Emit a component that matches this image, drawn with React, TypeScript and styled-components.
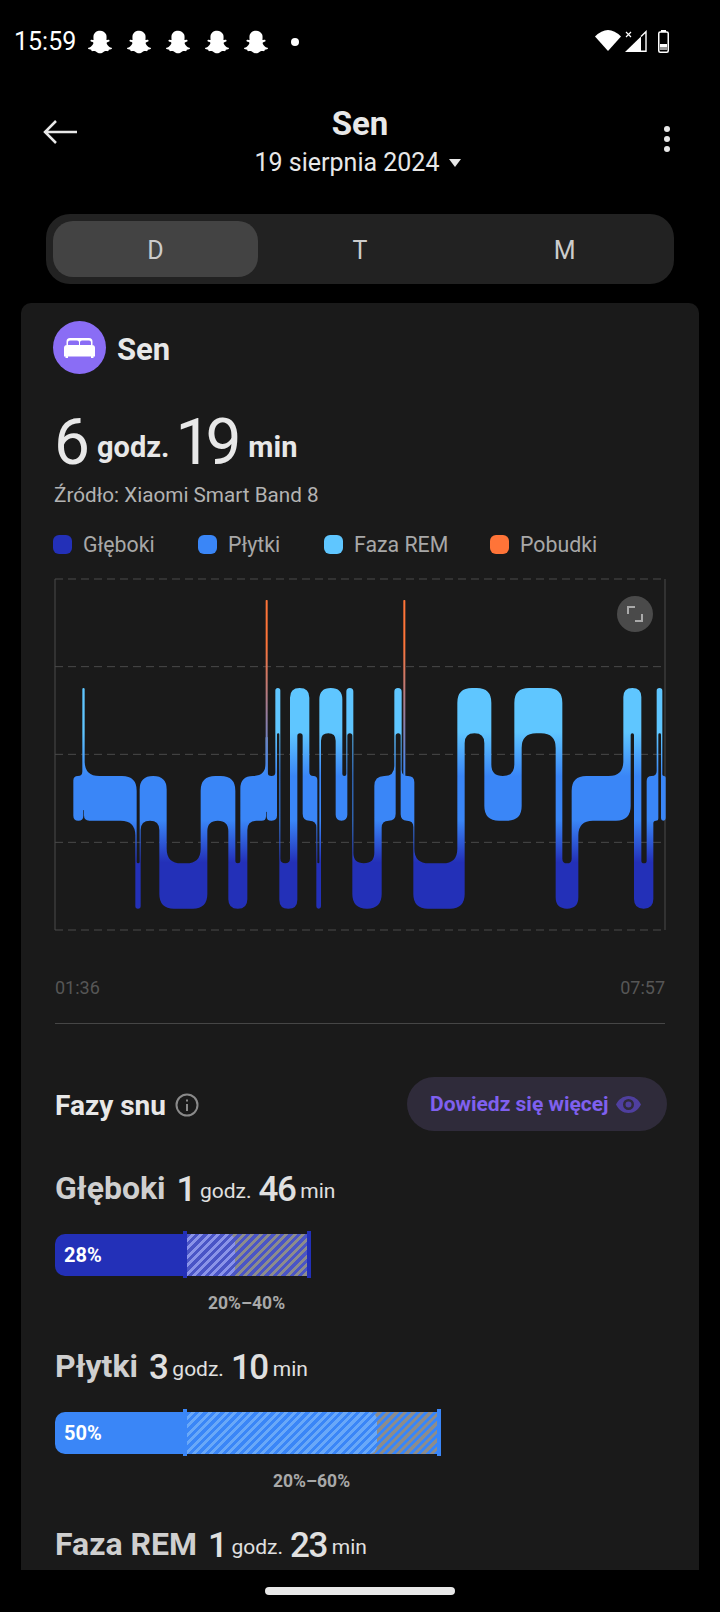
import styled, { createGlobalStyle } from "styled-components";
import { FaSnapchatGhost } from "react-icons/fa";

const GlobalStyle = createGlobalStyle`
    html, body {
        margin: 0;
        padding: 0;
        background: #000;
    }
    * {
        box-sizing: border-box;
    }
`;

const Page = styled.div`
    width: 720px;
    height: 1612px;
    background: #000;
    display: flex;
    flex-direction: column;
    overflow: hidden;
    font-family: Roboto, "Liberation Sans", sans-serif;
    color: #e8e8e8;
`;

const StatusBar = styled.div`
    height: 84px;
    flex: none;
    display: flex;
    align-items: center;
    padding: 0 51px 0 14px;
`;

const Clock = styled.span`
    font-size: 25px;
    line-height: 30px;
    color: #fff;
    margin-right: 12px;
`;

const Ghosts = styled.div`
    display: flex;
    gap: 15px;
    color: #fff;
`;

const StatusDot = styled.span`
    width: 8px;
    height: 8px;
    border-radius: 50%;
    background: #fff;
    margin-left: 23px;
`;

const StatusIcons = styled.div`
    margin-left: auto;
    height: 24px;
    display: flex;
    align-items: flex-start;
    gap: 4px;
`;

const Header = styled.header`
    flex: none;
    height: 130px;
    display: grid;
    grid-template-columns: 1fr auto 1fr;
    padding: 0 50px;
`;

const BackIcon = styled.svg`
    display: block;
    margin: 36px 0 0 -7px;
`;

const TitleBlock = styled.div`
    display: flex;
    flex-direction: column;
    align-items: center;
    padding-top: 20px;
`;

const Title = styled.h1`
    margin: 0;
    font-size: 33px;
    line-height: 40px;
    font-weight: 700;
`;

const DateRow = styled.div`
    display: flex;
    align-items: center;
    gap: 10px;
    font-size: 25px;
    line-height: 38px;
    margin-right: 4px;
`;

const Caret = styled.span`
    width: 0;
    height: 0;
    border-left: 6px solid transparent;
    border-right: 6px solid transparent;
    border-top: 8px solid #e8e8e8;
`;

const MoreDots = styled.div`
    justify-self: end;
    display: flex;
    flex-direction: column;
    gap: 4px;
    padding-top: 42px;
    span {
        width: 6px;
        height: 6px;
        border-radius: 50%;
        background: #e8e8e8;
    }
`;

const Tabs = styled.div`
    flex: none;
    margin: 0 46px;
    height: 70px;
    padding: 7px;
    border-radius: 24px;
    background: #222;
    display: grid;
    grid-template-columns: repeat(3, 1fr);
`;

const Tab = styled.div<{ $active?: boolean }>`
    display: flex;
    align-items: center;
    justify-content: center;
    padding-top: 3px;
    border-radius: 20px;
    font-size: 25px;
    color: #ccc;
    background: ${(p) => (p.$active ? "#434343" : "transparent")};
`;

const Card = styled.section`
    flex: 1;
    min-height: 0;
    margin: 19px 21px 0;
    padding: 18px 32px 0;
    border-radius: 10px 10px 0 0;
    background: #1a1a1a;
    overflow: hidden;
`;

const CardHead = styled.div`
    display: flex;
    align-items: center;
    gap: 11px;
`;

const BedCircle = styled.div`
    width: 53px;
    height: 53px;
    border-radius: 50%;
    background: #8a6df5;
    display: flex;
    align-items: center;
    justify-content: center;
`;

const CardTitle = styled.h2`
    margin: 4px 0 0;
    font-size: 31px;
    line-height: 40px;
    font-weight: 700;
`;

const Total = styled.div`
    display: flex;
    align-items: baseline;
    margin: 29px 0 0 1px;
    height: 78px;
    line-height: 80px;
`;

const TotalNum = styled.span`
    font-size: 64px;
    font-weight: 400;
    letter-spacing: -6px;
    margin-right: 13px;
`;

const TotalUnit = styled.span`
    font-size: 29px;
    font-weight: 700;
    margin-right: 6px;
    transform: translateY(-7px);
`;

const Source = styled.div`
    font-size: 20.7px;
    line-height: 28px;
    color: #b3b3b3;
    margin: 0 0 0 1px;
`;

const Legend = styled.div`
    display: flex;
    margin-top: 21px;
    height: 28px;
`;

const LegendItem = styled.div<{ $w: number }>`
    width: ${(p) => p.$w}px;
    display: flex;
    align-items: center;
    gap: 11px;
    font-size: 21.3px;
    color: #a8a8a8;
`;

const Swatch = styled.span<{ $color: string }>`
    width: 19px;
    height: 19px;
    border-radius: 6px;
    background: ${(p) => p.$color};
`;

const ChartBox = styled.div`
    position: relative;
    width: 612px;
    height: 354px;
    margin: 20px 0 0 1px;
`;

const ChartSvg = styled.svg`
    display: block;
`;

const ExpandButton = styled.div`
    position: absolute;
    top: 18px;
    right: 13px;
    width: 36px;
    height: 36px;
    border-radius: 50%;
    background: #4a4a4a;
    display: flex;
    align-items: center;
    justify-content: center;
`;

const TimeAxis = styled.div`
    display: flex;
    justify-content: space-between;
    margin: 44px 0 0 2px;
    width: 610px;
    font-size: 18px;
    line-height: 24px;
    color: #565656;
`;

const Divider = styled.div`
    height: 1px;
    width: 610px;
    margin: 23px 0 0 2px;
    background: #464646;
`;

const PhasesHead = styled.div`
    display: flex;
    align-items: center;
    justify-content: space-between;
    margin: 53px 0 36px 2px;
    height: 54px;
`;

const PhasesTitle = styled.div`
    display: flex;
    align-items: center;
    gap: 9px;
    padding-top: 2px;
    font-size: 28px;
    font-weight: 700;
`;

const MoreButton = styled.div`
    display: flex;
    align-items: center;
    gap: 7px;
    height: 54px;
    width: 260px;
    padding-left: 23px;
    border-radius: 27px;
    background: #2f2b3a;
    color: #7f60ef;
    font-size: 21px;
    font-weight: 700;
`;

const Phase = styled.div`
    margin: 0 0 0 2px;
    height: 178px;
`;

const PhaseHead = styled.div`
    display: flex;
    align-items: baseline;
    height: 46px;
    line-height: 46px;
    color: #e0e0e0;
`;

const PhaseName = styled.span`
    font-size: 32px;
    font-weight: 700;
    color: #cfcfcf;
    margin-right: 11px;
    transform: translateY(-2px);
`;

const PhaseNum = styled.span`
    font-size: 35px;
    font-weight: 500;
    letter-spacing: -1.5px;
    margin-right: 5px;
`;

const PhaseUnit = styled.span`
    font-size: 21px;
    margin-right: 7px;
    transform: translateY(-3px);
`;

const Bar = styled.div`
    display: flex;
    align-items: center;
    margin-top: 18px;
    height: 47px;
`;

const BarSolid = styled.div<{ $color: string }>`
    width: 128px;
    height: 42px;
    padding-left: 9px;
    border-radius: 10px 0 0 10px;
    background: ${(p) => p.$color};
    color: #fff;
    font-size: 20px;
    font-weight: 700;
    line-height: 42px;
`;

const BarTick = styled.div<{ $color: string }>`
    width: 4px;
    height: 47px;
    background: ${(p) => p.$color};
`;

const Hatch = styled.div<{ $w: number; $stripe: string }>`
    position: relative;
    width: ${(p) => p.$w}px;
    height: 42px;
    background: repeating-linear-gradient(135deg, ${(p) => p.$stripe} 0 3px, #8c8c8c 3px 6px);
`;

const HatchFill = styled.div<{ $w: number; $stripe: string; $light: string }>`
    position: absolute;
    top: 0;
    bottom: 0;
    left: 0;
    width: ${(p) => p.$w}px;
    border-radius: 0 8px 8px 0;
    background: repeating-linear-gradient(135deg, ${(p) => p.$stripe} 0 3px, ${(p) => p.$light} 3px 6px);
`;

const RangeLabel = styled.div<{ $left: number }>`
    margin: 13px 0 0 ${(p) => p.$left}px;
    font-size: 17.5px;
    line-height: 24px;
    font-weight: 700;
    color: #a8a8a8;
`;

const HomeBar = styled.div`
    flex: none;
    height: 42px;
    display: flex;
    justify-content: center;
    padding-top: 17px;
    span {
        width: 190px;
        height: 8px;
        border-radius: 4px;
        background: #e8e8e8;
    }
`;

// outline of the sleep graph, measured on a 3x grid; the second half has its own origin
const graphLeftTop = [
    [100, 618], [127, 618], [127, 354], [134, 354], [134, 618], [290, 618], [290, 880], [299, 880], [299, 618],
    [380, 618], [380, 880], [482, 880], [482, 618], [586, 618], [586, 880], [601, 880], [601, 618], [677, 618],
    [677, 500], [683, 500], [683, 618], [706, 618], [706, 354], [721, 354], [721, 880], [750, 880], [750, 354],
    [808, 354], [808, 618], [832, 618], [832, 880], [838, 880], [838, 354], [907, 354], [907, 618], [919, 618],
    [919, 354], [940, 354], [940, 880],
];

const graphRight = [
    [73, 880], [73, 618], [133, 618], [133, 354], [155, 354], [155, 618], [193, 618], [193, 880], [322, 880],
    [322, 354], [424, 354], [424, 618], [493, 618], [493, 354], [637, 354], [637, 880], [665, 880], [665, 618],
    [820, 618], [820, 354], [874, 354], [874, 880], [890, 880], [890, 618], [920, 618], [920, 354], [937, 354],
    [937, 618], [947, 618], [947, 752], [933, 752], [933, 490], [925, 490], [925, 752], [910, 752], [910, 1016],
    [852, 1016], [852, 490], [842, 490], [842, 752], [685, 752], [685, 1016], [617, 1016], [617, 490], [515, 490],
    [515, 752], [403, 752], [403, 490], [344, 490], [344, 1016], [190, 1016], [190, 752], [152, 752], [152, 490],
    [137, 490], [137, 752], [95, 752], [95, 1016], [7, 1016], [7, 490],
].map(([x, y]) => [x + 930, y]);

const graphLeftBottom = [
    [922, 490], [922, 752], [887, 752], [887, 490], [843, 490], [843, 1016], [829, 1016], [829, 752], [788, 752],
    [788, 490], [772, 490], [772, 1016], [718, 1016], [718, 490], [711, 490], [711, 752], [680, 752], [680, 725],
    [678, 725], [678, 752], [622, 752], [622, 1016], [565, 1016], [565, 752], [502, 752], [502, 1016], [358, 1016],
    [358, 752], [302, 752], [302, 1016], [286, 1016], [286, 752], [132, 752], [132, 720], [130, 720], [130, 752],
    [100, 752],
];

function roundedPath(points: number[][], radius: number) {
    const n = points.length;
    let d = "";
    points.forEach((c, i) => {
        const p = points[(i + n - 1) % n];
        const q = points[(i + 1) % n];
        const d1 = Math.hypot(p[0] - c[0], p[1] - c[1]);
        const d2 = Math.hypot(q[0] - c[0], q[1] - c[1]);
        const r = Math.min(radius, d1 / 2, d2 / 2);
        const ax = c[0] + ((p[0] - c[0]) / d1) * r;
        const ay = c[1] + ((p[1] - c[1]) / d1) * r;
        const bx = c[0] + ((q[0] - c[0]) / d2) * r;
        const by = c[1] + ((q[1] - c[1]) / d2) * r;
        d += `${i === 0 ? "M" : "L"}${ax} ${ay}Q${c[0]} ${c[1]} ${bx} ${by}`;
    });
    return d + "Z";
}

const graphPath = roundedPath([...graphLeftTop, ...graphRight, ...graphLeftBottom], 44);

function SleepChart() {
    const gridLine = { stroke: "#4a4a4a", strokeWidth: 3, strokeDasharray: "24 15" };
    return (
        <ChartSvg width="612" height="354" viewBox="42 24 1836 1062">
            <defs>
                <linearGradient id="stages" gradientUnits="userSpaceOnUse" x1="0" y1="354" x2="0" y2="1016">
                    <stop offset="0.2" stopColor="#5fc6ff" />
                    <stop offset="0.4" stopColor="#3a86f7" />
                    <stop offset="0.6" stopColor="#3a86f7" />
                    <stop offset="0.79" stopColor="#2330b8" />
                </linearGradient>
                <linearGradient id="wake" gradientUnits="userSpaceOnUse" x1="0" y1="90" x2="0" y2="620">
                    <stop offset="0.25" stopColor="#ff7438" />
                    <stop offset="1" stopColor="#3a86f7" />
                </linearGradient>
            </defs>
            <line x1="45" y1="27" x2="1875" y2="27" {...gridLine} />
            <line x1="45" y1="290" x2="1875" y2="290" {...gridLine} />
            <line x1="45" y1="553" x2="1875" y2="553" {...gridLine} />
            <line x1="45" y1="817" x2="1875" y2="817" {...gridLine} />
            <line x1="45" y1="1080" x2="1875" y2="1080" {...gridLine} />
            <line x1="45" y1="27" x2="45" y2="1080" stroke="#4a4a4a" strokeWidth="3" />
            <line x1="1875" y1="27" x2="1875" y2="1080" stroke="#4a4a4a" strokeWidth="3" />
            <path d={graphPath} fill="url(#stages)" />
            <rect x="677" y="90" width="6" height="530" rx="2" fill="url(#wake)" />
            <rect x="1090" y="90" width="6" height="530" rx="2" fill="url(#wake)" />
        </ChartSvg>
    );
}

function BedIcon() {
    return (
        <svg width="31" height="20" viewBox="0 0 31 20" fill="#fff">
            <path d="M6 0H25A3.500 3.500 0 0 1 28.500 3.500V7H27V4.500A2 2 0 0 0 25 2.500H18A2 2 0 0 0 16 4.500V7H15V4.500A2 2 0 0 0 13 2.500H6A2 2 0 0 0 4 4.500V7H2.500V3.500A3.500 3.500 0 0 1 6 0Z" />
            <path d="M3 7H28A3 3 0 0 1 31 10V18.500H0V10A3 3 0 0 1 3 7Z" />
            <rect x="1.500" y="18" width="2.500" height="2" />
            <rect x="27" y="18" width="2.500" height="2" />
        </svg>
    );
}

const phases = [
    {
        name: "Głęboki",
        hours: "1",
        mins: "46",
        pct: "28%",
        range: "20%–40%",
        color: "#2330b8",
        stripe: "#4a55c6",
        light: "#8a93e8",
        hatch: 120,
        fill: 48,
        rangeLeft: 153,
    },
    {
        name: "Płytki",
        hours: "3",
        mins: "10",
        pct: "50%",
        range: "20%–60%",
        color: "#3a86f7",
        stripe: "#3a86f7",
        light: "#69a8f8",
        hatch: 250,
        fill: 190,
        rangeLeft: 218,
    },
    {
        name: "Faza REM",
        hours: "1",
        mins: "23",
        pct: "",
        range: "",
        color: "#5fc6ff",
        stripe: "#5fc6ff",
        light: "#8fd8ff",
        hatch: 0,
        fill: 0,
        rangeLeft: 0,
    },
];

function App() {
    return (
        <Page>
            <GlobalStyle />
            <StatusBar>
                <Clock>15:59</Clock>
                <Ghosts>
                    {[0, 1, 2, 3, 4].map((i) => (
                        <FaSnapchatGhost key={i} size={24} />
                    ))}
                </Ghosts>
                <StatusDot />
                <StatusIcons>
                    <svg width="26" height="21" viewBox="0 0 26 21" fill="#fff">
                        <path d="M0 6.500Q13 -6.500 26 6.500L13 21Z" />
                    </svg>
                    <svg width="22" height="23" viewBox="0 0 22 23" fill="#fff" style={{ marginRight: 7 }}>
                        <path d="M0 22 16 6.500V22Z" />
                        <path d="M16 6.500 21 1.700V21.300H16" fill="none" stroke="#fff" strokeWidth="1.400" />
                        <path d="M1 2l5 5M6 2 1 7" stroke="#fff" strokeWidth="1.200" fill="none" />
                    </svg>
                    <svg width="11" height="23" viewBox="0 0 11 23">
                        <rect x="3" y="0" width="5" height="2" fill="#fff" />
                        <rect x="0.750" y="2" width="9.500" height="20.250" rx="1.500" fill="none" stroke="#fff" strokeWidth="1.500" />
                        <rect x="2" y="14" width="7" height="3" fill="#fff" />
                        <rect x="2" y="17" width="7" height="3" fill="#999" />
                    </svg>
                </StatusIcons>
            </StatusBar>
            <Header>
                <BackIcon width="34" height="24" viewBox="0 0 34 24" fill="none" stroke="#e8e8e8" strokeWidth="2.500">
                    <path d="M34 12H2M13 1 2 12l11 11" />
                </BackIcon>
                <TitleBlock>
                    <Title>Sen</Title>
                    <DateRow>
                        19 sierpnia 2024
                        <Caret />
                    </DateRow>
                </TitleBlock>
                <MoreDots>
                    <span />
                    <span />
                    <span />
                </MoreDots>
            </Header>
            <Tabs>
                <Tab $active>D</Tab>
                <Tab>T</Tab>
                <Tab>M</Tab>
            </Tabs>
            <Card>
                <CardHead>
                    <BedCircle>
                        <BedIcon />
                    </BedCircle>
                    <CardTitle>Sen</CardTitle>
                </CardHead>
                <Total>
                    <TotalNum>6</TotalNum>
                    <TotalUnit>godz.</TotalUnit>
                    <TotalNum>19</TotalNum>
                    <TotalUnit>min</TotalUnit>
                </Total>
                <Source>Źródło: Xiaomi Smart Band 8</Source>
                <Legend>
                    <LegendItem $w={145}>
                        <Swatch $color="#2330b8" />
                        Głęboki
                    </LegendItem>
                    <LegendItem $w={126}>
                        <Swatch $color="#3a86f7" />
                        Płytki
                    </LegendItem>
                    <LegendItem $w={166}>
                        <Swatch $color="#5fc6ff" />
                        Faza REM
                    </LegendItem>
                    <LegendItem $w={120}>
                        <Swatch $color="#ff7438" />
                        Pobudki
                    </LegendItem>
                </Legend>
                <ChartBox>
                    <SleepChart />
                    <ExpandButton>
                        <svg width="16" height="16" viewBox="0 0 16 16" fill="none" stroke="#aaa" strokeWidth="2">
                            <path d="M1 8V1h7M15 8v7H8" />
                        </svg>
                    </ExpandButton>
                </ChartBox>
                <TimeAxis>
                    <span>01:36</span>
                    <span>07:57</span>
                </TimeAxis>
                <Divider />
                <PhasesHead>
                    <PhasesTitle>
                        Fazy snu
                        <svg width="24" height="24" viewBox="0 0 24 24" fill="none" stroke="#8a8a8a" strokeWidth="2">
                            <circle cx="12" cy="12" r="10.500" />
                            <path d="M12 11v7M12 6.500v2" />
                        </svg>
                    </PhasesTitle>
                    <MoreButton>
                        Dowiedz się więcej
                        <svg width="25" height="17" viewBox="0 0 25 17" fill="#4f3f9e">
                            <path
                                fillRule="evenodd"
                                d="M12.500 0C18 0 22.500 3.500 25 8.500 22.500 13.500 18 17 12.500 17S2.500 13.500 0 8.500C2.500 3.500 7 0 12.500 0Zm0 3a5.500 5.500 0 1 0 0 11 5.500 5.500 0 0 0 0-11Zm0 2.500a3 3 0 1 1 0 6 3 3 0 0 1 0-6Z"
                            />
                        </svg>
                    </MoreButton>
                </PhasesHead>
                {phases.map((phase) => (
                    <Phase key={phase.name}>
                        <PhaseHead>
                            <PhaseName>{phase.name}</PhaseName>
                            <PhaseNum>{phase.hours}</PhaseNum>
                            <PhaseUnit>godz.</PhaseUnit>
                            <PhaseNum>{phase.mins}</PhaseNum>
                            <PhaseUnit>min</PhaseUnit>
                        </PhaseHead>
                        {phase.hatch > 0 && (
                            <>
                                <Bar>
                                    <BarSolid $color={phase.color}>{phase.pct}</BarSolid>
                                    <BarTick $color={phase.color} />
                                    <Hatch $w={phase.hatch} $stripe={phase.stripe}>
                                        <HatchFill $w={phase.fill} $stripe={phase.stripe} $light={phase.light} />
                                    </Hatch>
                                    <BarTick $color={phase.color} />
                                </Bar>
                                <RangeLabel $left={phase.rangeLeft}>{phase.range}</RangeLabel>
                            </>
                        )}
                    </Phase>
                ))}
            </Card>
            <HomeBar>
                <span />
            </HomeBar>
        </Page>
    );
}

export default App;
